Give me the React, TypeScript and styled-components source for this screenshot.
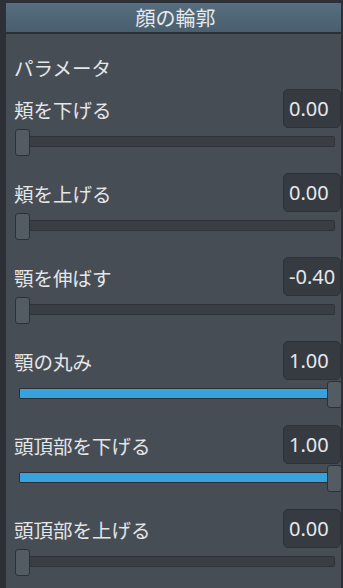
import React from "react";
import styled, { createGlobalStyle } from "styled-components";

const Global = createGlobalStyle`
  html, body { margin: 0; padding: 0; background: #2d3137; }
  body { font-family: "Noto Sans CJK JP", "Noto Sans", sans-serif; }
`;

const Frame = styled.div`
  width: 343px;
  height: 588px;
  box-sizing: border-box;
  padding: 3px 2px 0 6px;
  background: #2d3137;
  overflow: hidden;
`;

const Panel = styled.div`
  height: 100%;
  background: #474d55;
  display: flex;
  flex-direction: column;
`;

const Header = styled.div`
  height: 32px;
  background: linear-gradient(#566e7f, #4a5f6e);
  border-bottom: 2px solid #2b2f35;
  color: #e8eaec;
  font-size: 20px;
  display: flex;
  align-items: center;
  justify-content: center;
  padding-left: 4px;
`;

const Body = styled.div`
  padding: 20px 0 0 8px;
  display: flex;
  flex-direction: column;
`;

const SectionTitle = styled.div`
  height: 28px;
  line-height: 28px;
  font-size: 19.5px;
  color: #e4e6e8;
  margin-bottom: 7px;
`;

const Row = styled.div`
  display: flex;
  flex-direction: column;
  height: 84px;
`;

const RowHead = styled.div`
  display: flex;
  align-items: center;
  justify-content: space-between;
  height: 39px;
`;

const Label = styled.div`
  font-size: 19.5px;
  color: #e4e6e8;
  padding-top: 1px;
`;

const ValueBox = styled.div`
  width: 58px;
  height: 39px;
  box-sizing: border-box;
  background: #363b42;
  border: 1px solid #2e3238;
  border-radius: 5px;
  color: #e6e8ea;
  font-family: "Noto Sans", sans-serif;
  font-size: 20px;
  display: flex;
  align-items: center;
  padding-left: 5px;
`;

const Slider = styled.div`
  position: relative;
  height: 27px;
  margin-top: 1px;
  width: 327px;
`;

const Track = styled.div`
  position: absolute;
  left: 5px;
  right: 6px;
  top: 7px;
  height: 11px;
  box-sizing: border-box;
  background: #393e45;
  border: 1px solid #2f3339;
  border-radius: 2px;
`;

const Fill = styled.div`
  position: absolute;
  left: 5px;
  top: 7px;
  height: 11px;
  box-sizing: border-box;
  background: #38a2dd;
  border: 1px solid #2b2f35;
  border-radius: 1px;
`;

const Thumb = styled.div`
  position: absolute;
  top: 0;
  width: 15px;
  height: 27px;
  box-sizing: border-box;
  background: #535b63;
  border: 1px solid #2d3137;
  border-radius: 3px;
`;

type Param = { label: string; value: string; t: number };

const params: Param[] = [
  { label: "頬を下げる", value: "0.00", t: 0 },
  { label: "頬を上げる", value: "0.00", t: 0 },
  { label: "顎を伸ばす", value: "-0.40", t: 0 },
  { label: "顎の丸み", value: "1.00", t: 1 },
  { label: "頭頂部を下げる", value: "1.00", t: 1 },
  { label: "頭頂部を上げる", value: "0.00", t: 0 },
];

const RANGE = 312;

export default function App() {
  return (
    <>
      <Global />
      <Frame>
        <Panel>
          <Header>顔の輪郭</Header>
          <Body>
            <SectionTitle>パラメータ</SectionTitle>
            {params.map((p) => {
              const x = Math.round(p.t * RANGE);
              return (
                <Row key={p.label}>
                  <RowHead>
                    <Label>{p.label}</Label>
                    <ValueBox>{p.value}</ValueBox>
                  </RowHead>
                  <Slider>
                    <Track />
                    {p.t > 0 && <Fill style={{ width: x + 4 }} />}
                    <Thumb style={{ left: x + 1 }} />
                  </Slider>
                </Row>
              );
            })}
          </Body>
        </Panel>
      </Frame>
    </>
  );
}
